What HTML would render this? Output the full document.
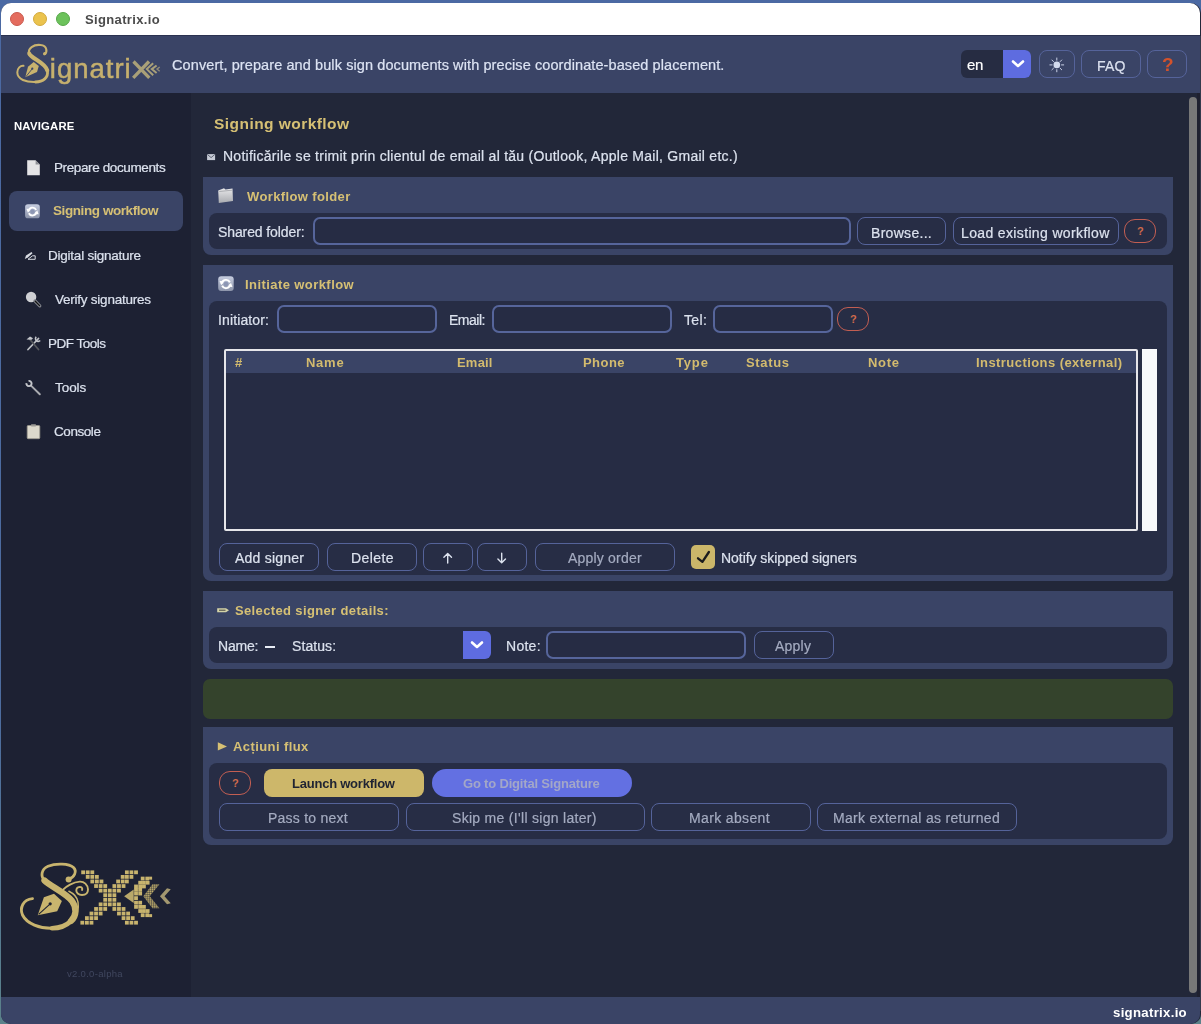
<!DOCTYPE html>
<html><head><meta charset="utf-8">
<style>
*{box-sizing:border-box;margin:0;padding:0}
html,body{width:1201px;height:1024px;overflow:hidden;background:linear-gradient(to bottom,#4b69a3 0%,#4d6c9e 70%,#5b828a 100%);font-family:"Liberation Sans",sans-serif;position:relative}
.r{position:absolute}
.t{position:absolute;white-space:nowrap;line-height:1;will-change:transform}
.t.nw{-webkit-text-stroke:0.2px currentColor}
#win{left:1px;top:3px;width:1200px;height:1021px;border-radius:10px;background:#222739}
#title{left:1px;top:3px;width:1199px;height:32px;background:#fff;border-radius:10px 10px 0 0}
#tline{left:1px;top:35px;width:1199px;height:1px;background:#2b3250}
.dot{position:absolute;top:11.6px;width:14px;height:14px;border-radius:50%}
#hdr{left:1px;top:36px;width:1199px;height:57px;background:#3a4466}
#side{left:1px;top:93px;width:190px;height:904px;background:#1d2133}
#foot{left:1px;top:997px;width:1199px;height:27px;background:#3a4466;border-radius:0 0 10px 10px}
.card{position:absolute;left:203px;width:970px;background:#3a4466;border-radius:0 0 8px 8px}
.panel{position:absolute;left:209px;width:958px;background:#272d45;border-radius:8px}
.inp{position:absolute;border:2px solid #56659b;border-radius:7px;background:#262c44}
.btn{position:absolute;border:1px solid #55639a;border-radius:8px}
.q{position:absolute;border:1px solid #c25e52;border-radius:11px}
.qt{position:absolute;color:#cf6a4c;font-size:11px;font-weight:bold;line-height:1;white-space:nowrap}

</style></head><body>
<div class="r" id="win"></div>
<div class="r" id="title"></div>
<div class="r" id="tline"></div>
<div class="dot" style="left:10px;background:#e46c5e;border:1px solid #c95a4e"></div>
<div class="dot" style="left:33px;background:#ebc34d;border:1px solid #d3aa3d"></div>
<div class="dot" style="left:56px;background:#6cc25b;border:1px solid #57a84a"></div>
<div class="r" id="hdr"></div>
<div class="r" id="side"></div>
<div class="r" id="foot"></div>
<!-- header controls -->
<div class="r" style="left:961px;top:50px;width:70px;height:28px;border-radius:6px;background:#262c42;overflow:hidden"><div class="r" style="left:42px;top:0;width:28px;height:28px;background:#5e6ce0"></div></div>
<svg class="r" style="left:1010px;top:58px" width="16" height="12" viewBox="0 0 16 12"><path d="M3 3.5 L8 8 L13 3.5" fill="none" stroke="#fff" stroke-width="2.6" stroke-linecap="round" stroke-linejoin="round"/></svg>
<div class="btn" style="left:1039px;top:50px;width:36px;height:28px"></div>
<svg class="r" style="left:1048px;top:56px" width="18" height="18" viewBox="0 0 18 18"><circle cx="8.8" cy="8.9" r="3.3" fill="#d3dbee"/><g stroke="#c9d1e6" stroke-width="1" stroke-linecap="round"><path d="M8.8 2V4.2M8.8 13.6V15.8M1.9 8.9H4.1M13.5 8.9H15.7M3.9 4L5.5 5.6M12.1 12.2L13.7 13.8M3.9 13.8L5.5 12.2M12.1 5.6L13.7 4"/></g></svg>
<div class="btn" style="left:1081px;top:50px;width:60px;height:28px"></div>
<div class="btn" style="left:1147px;top:50px;width:40px;height:28px"></div>
<div class="t" style="left:1162px;top:55px;font-size:19px;font-weight:bold;color:#d2522c">?</div>
<!-- sidebar -->
<div class="r" style="left:9px;top:191px;width:174px;height:40px;border-radius:8px;background:#3a4466"></div>
<!-- main scrollbar -->
<div class="r" id="rstrip" style="left:1197px;top:93px;width:3px;height:904px;background:#1f2130"></div>
<div class="r" style="left:1200px;top:36px;width:1px;height:975px;background:#343a4c"></div>
<div class="r" style="left:1189px;top:97px;width:8px;height:896px;border-radius:4px;background:#787878"></div>
<!-- card 1 -->
<div class="card" style="top:177px;height:78px"></div>
<div class="panel" style="top:213px;height:36px"></div>
<div class="inp" style="left:313px;top:217px;width:538px;height:28px"></div>
<div class="btn" style="left:857px;top:217px;width:89px;height:28px"></div>
<div class="btn" style="left:953px;top:217px;width:166px;height:28px"></div>
<div class="q" style="left:1124px;top:219px;width:32px;height:24px"></div>
<div class="qt" style="left:1137px;top:225.5px">?</div>
<!-- card 2 -->
<div class="card" style="top:265px;height:316px"></div>
<div class="panel" style="top:301px;height:274px"></div>
<div class="inp" style="left:277px;top:305px;width:160px;height:28px"></div>
<div class="inp" style="left:492px;top:305px;width:180px;height:28px"></div>
<div class="inp" style="left:713px;top:305px;width:120px;height:28px"></div>
<div class="q" style="left:837px;top:307px;width:32px;height:24px"></div>
<div class="qt" style="left:850px;top:313.5px">?</div>
<div class="r" style="left:224px;top:349px;width:914px;height:182px;border:2px solid #e6e6ea;border-radius:2px;background:#262c44"></div>
<div class="r" style="left:226px;top:351px;width:910px;height:22px;background:#3a4466"></div>
<div class="r" style="left:1142px;top:349px;width:15px;height:182px;background:#f8f9fb"></div>
<div class="btn" style="left:219px;top:543px;width:100px;height:28px"></div>
<div class="btn" style="left:327px;top:543px;width:90px;height:28px"></div>
<div class="btn" style="left:423px;top:543px;width:50px;height:28px"></div>
<div class="btn" style="left:477px;top:543px;width:50px;height:28px"></div>
<div class="btn" style="left:535px;top:543px;width:140px;height:28px"></div>
<div class="r" style="left:691px;top:545px;width:24px;height:24px;border-radius:5px;background:#cbb66a"></div>
<!-- card 3 -->
<div class="card" style="top:591px;height:78px"></div>
<div class="panel" style="top:627px;height:36px"></div>
<div class="r" style="left:265px;top:645.5px;width:10px;height:2px;background:#e8ecf5"></div>
<div class="r" style="left:463px;top:631px;width:28px;height:28px;border-radius:0 6px 6px 0;background:#5e6ce0"></div>
<svg class="r" style="left:469px;top:639px" width="16" height="12" viewBox="0 0 16 12"><path d="M3 3.5 L8 8 L13 3.5" fill="none" stroke="#fff" stroke-width="2.6" stroke-linecap="round" stroke-linejoin="round"/></svg>
<div class="inp" style="left:546px;top:631px;width:200px;height:28px"></div>
<div class="btn" style="left:754px;top:631px;width:80px;height:28px"></div>
<!-- green bar -->
<div class="r" style="left:203px;top:679px;width:970px;height:40px;border-radius:7px;background:#34432c"></div>
<!-- card 4 -->
<div class="card" style="top:727px;height:118px"></div>
<div class="panel" style="top:763px;height:76px"></div>
<div class="q" style="left:219px;top:771px;width:32px;height:24px"></div>
<div class="qt" style="left:232px;top:777.5px">?</div>
<div class="r" style="left:264px;top:769px;width:160px;height:28px;border-radius:8px;background:#cdb76a"></div>
<div class="r" style="left:432px;top:769px;width:200px;height:28px;border-radius:14px;background:#6370e2"></div>
<div class="btn" style="left:219px;top:803px;width:180px;height:28px"></div>
<div class="btn" style="left:406px;top:803px;width:239px;height:28px"></div>
<div class="btn" style="left:651px;top:803px;width:160px;height:28px"></div>
<div class="btn" style="left:817px;top:803px;width:200px;height:28px"></div>

<svg class="r" style="left:0;top:0" width="1201" height="1024" viewBox="0 0 1201 1024">
<defs>
 <linearGradient id="gsync" x1="0" y1="0" x2="0" y2="1"><stop offset="0" stop-color="#c6cde0"/><stop offset="1" stop-color="#8c94aa"/></linearGradient>
 <linearGradient id="gfold" x1="0" y1="0" x2="0" y2="1"><stop offset="0" stop-color="#e8e8ea"/><stop offset="1" stop-color="#a9abb0"/></linearGradient>
<g id="sync">
 <rect x="0" y="0" width="15.5" height="14.8" rx="3" fill="url(#gsync)"/>
 <circle cx="7.8" cy="7.7" r="2.3" fill="#8d97b4"/>
 <g fill="none" stroke="#fff" stroke-width="1.9">
  <path d="M3.6 7.4 A4.3 4.3 0 0 1 11.7 5.9"/>
  <path d="M12 8.1 A4.3 4.3 0 0 1 3.9 9.5"/>
 </g>
 <path d="M1.4 4.8 L5.9 5 L3 8.9 Z M14.2 10.6 L9.8 10.2 L12.8 6.4 Z" fill="#fff"/>
</g>
<pattern id="grid" x="0" y="0" width="1.9" height="1.9" patternUnits="userSpaceOnUse"><rect width="1.5" height="1.5" fill="#c8b46e"/></pattern>
</defs>
<!-- ===== header logo ===== -->
<g fill="none" stroke="#c9b36e" stroke-linecap="round">
 <path d="M44.3 54.2 C47.5 52.5 47.6 45.6 40.5 45 C33.5 44.3 27.5 48.5 29.2 53.5" stroke-width="2.1"/>
 <path d="M29.2 53.5 C31 58.5 45.5 62.5 47.3 70.5" stroke-width="4"/>
 <path d="M47.3 70.5 C48.8 77.5 43 82 35.5 82" stroke-width="2.8"/>
 <path d="M35.5 82 C26 82.3 17.5 79.5 17.3 72.5 C17.2 68 20.5 65.5 23.5 65.8" stroke-width="2"/>
</g>
<circle cx="44.8" cy="53.6" r="1.7" fill="#c9b36e"/>
<path d="M33.7 62 L38.8 66 L37 72 L25.3 77.3 L28 66.7 Z" fill="#c9b36e"/>
<path d="M32.3 68.7 L25.8 76.8" stroke="#3a4466" stroke-width="0.9"/>
<circle cx="32.3" cy="68.7" r="1.1" fill="#3a4466"/>
<text x="49.8" y="78" font-family="Liberation Sans" font-size="27.5" fill="#c6b06e" stroke="#c6b06e" stroke-width="0.5" letter-spacing="1.0">ignatri</text>
<g stroke="#a9a078" stroke-width="3.3" stroke-linecap="butt">
 <path d="M133.5 61.5 L149.3 77.8 M149 61.5 L133.2 77.8"/>
</g>
<g fill="none" stroke="#a9a078" stroke-width="2">
 <path d="M153.2 63.3 L146.8 69.1 L153.2 75.3"/>
 <path d="M156.6 65.5 L151.8 69.1 L156.6 73"/>
 <path d="M159.7 67 L157 69.1 L159.7 71.3" stroke-width="1.4" stroke="#8f8a78"/>
</g>
<!-- ===== sidebar icons ===== -->
<path d="M27.2 160.2 H35.6 L39.8 164.4 V175.2 H27.2 Z" fill="#e4e4e6"/>
<path d="M35.6 160.2 V164.4 H39.8 Z" fill="#8d8f96"/>
<use href="#sync" transform="translate(25.1 204.2) scale(0.95)"/>
<g fill="#d8dbe2">
 <path d="M24.8 259 L26 255.5 L31.5 252 L32.5 253.2 L27.8 257.5 Z"/>
 <path d="M28 259.3 H35.2 V255.8 H32.5 Z" fill="none" stroke="#d8dbe2" stroke-width="1"/>
</g>
<circle cx="31.1" cy="297" r="5.2" fill="#cfd0d4"/>
<path d="M35 301 L39.8 305.8" stroke="#80838b" stroke-width="3.2" stroke-linecap="round"/>
<path d="M35.3 301.3 L39.6 305.6" stroke="#141414" stroke-width="1.3" stroke-linecap="round"/>
<g stroke="#bdbfc4" stroke-width="1.8" stroke-linecap="round">
 <path d="M28 349.5 L38.5 338.5"/>
 <path d="M29.5 339 L38.5 349.5" stroke="#55575c"/>
</g>
<path d="M26.5 339.5 L30 336.5 L33 338.2 L31.6 339.8 Z" fill="#c4c6cb"/>
<path d="M36.2 336.8 A2.6 2.6 0 1 0 40.2 340.5" fill="none" stroke="#c4c6cb" stroke-width="1.6"/>
<path d="M31 385.6 L39.8 394.2" stroke="#a9abb0" stroke-width="2" stroke-linecap="round"/>
<path d="M28.55 380.94 A2.6 2.6 0 1 1 26.44 383.05" fill="none" stroke="#c4c6cb" stroke-width="1.9"/>
<rect x="27.2" y="425.5" width="12.6" height="13.2" rx="1" fill="#ddd9cc" stroke="#9a978d" stroke-width="0.8"/>
<rect x="31" y="424.2" width="5" height="2.2" rx="0.6" fill="#9c9a95"/>
<!-- ===== main icons ===== -->
<rect x="207.1" y="154.1" width="8" height="6" fill="#c7cbd6"/>
<path d="M207.3 154.4 L211.1 157.6 L214.9 154.4" fill="none" stroke="#444a5c" stroke-width="0.8"/>
<path d="M218.2 190.5 L224 188.3 L225.5 189.5 L232.5 188.5 L233 201 L218.8 203 Z" fill="url(#gfold)"/>
<path d="M219.3 191.5 L232 190.2" stroke="#8a8c92" stroke-width="0.6"/>
<use href="#sync" transform="translate(218.2 276.3)"/>
<path d="M217.2 608.2 H226 L229 610.2 L226 612.2 H217.2 Z" fill="#d4d3a8"/>
<path d="M219 610.2 H225.5" stroke="#333" stroke-width="0.9"/>
<path d="M217.8 742.3 L227 746.5 L217.8 750.6 Z" fill="#d6c074"/>
<!-- arrows -->
<g stroke="#dce2ee" stroke-width="1.4" fill="none" stroke-linecap="round" stroke-linejoin="round">
 <path d="M447.7 563 V553.6 M443.9 557.2 L447.7 553.4 L451.5 557.2"/>
 <path d="M501.7 553.2 V562.6 M497.9 559 L501.7 562.8 L505.5 559"/>
</g>
<path d="M698 558.3 L702.4 561.9 L708.9 552" fill="none" stroke="#1b1b1d" stroke-width="2.3" stroke-linecap="round" stroke-linejoin="round"/>
<!-- ===== sidebar logo ===== -->
<g fill="#c8b46e">
<rect x="81.24" y="870.41" width="3.8" height="3.8"/>
<rect x="85.82" y="870.41" width="3.8" height="3.8"/>
<rect x="90.40" y="870.41" width="3.8" height="3.8"/>
<rect x="124.96" y="870.41" width="3.8" height="3.8"/>
<rect x="129.54" y="870.41" width="3.8" height="3.8"/>
<rect x="134.12" y="870.41" width="3.8" height="3.8"/>
<rect x="85.82" y="874.99" width="3.8" height="3.8"/>
<rect x="90.40" y="874.99" width="3.8" height="3.8"/>
<rect x="94.98" y="874.99" width="3.8" height="3.8"/>
<rect x="120.80" y="874.99" width="3.8" height="3.8"/>
<rect x="124.96" y="874.99" width="3.8" height="3.8"/>
<rect x="129.54" y="874.99" width="3.8" height="3.8"/>
<rect x="90.40" y="879.57" width="3.8" height="3.8"/>
<rect x="94.98" y="879.57" width="3.8" height="3.8"/>
<rect x="99.56" y="879.57" width="3.8" height="3.8"/>
<rect x="116.22" y="879.57" width="3.8" height="3.8"/>
<rect x="120.80" y="879.57" width="3.8" height="3.8"/>
<rect x="124.96" y="879.57" width="3.8" height="3.8"/>
<rect x="94.15" y="884.15" width="3.8" height="3.8"/>
<rect x="98.73" y="884.15" width="3.8" height="3.8"/>
<rect x="103.31" y="884.15" width="3.8" height="3.8"/>
<rect x="112.47" y="884.15" width="3.8" height="3.8"/>
<rect x="117.05" y="884.15" width="3.8" height="3.8"/>
<rect x="121.63" y="884.15" width="3.8" height="3.8"/>
<rect x="98.73" y="888.73" width="3.8" height="3.8"/>
<rect x="103.31" y="888.73" width="3.8" height="3.8"/>
<rect x="107.89" y="888.73" width="3.8" height="3.8"/>
<rect x="112.47" y="888.73" width="3.8" height="3.8"/>
<rect x="117.05" y="888.73" width="3.8" height="3.8"/>
<rect x="103.31" y="893.31" width="3.8" height="3.8"/>
<rect x="107.89" y="893.31" width="3.8" height="3.8"/>
<rect x="112.47" y="893.31" width="3.8" height="3.8"/>
<rect x="103.31" y="897.89" width="3.8" height="3.8"/>
<rect x="107.89" y="897.89" width="3.8" height="3.8"/>
<rect x="112.47" y="897.89" width="3.8" height="3.8"/>
<rect x="98.73" y="902.47" width="3.8" height="3.8"/>
<rect x="103.31" y="902.47" width="3.8" height="3.8"/>
<rect x="107.89" y="902.47" width="3.8" height="3.8"/>
<rect x="112.47" y="902.47" width="3.8" height="3.8"/>
<rect x="117.05" y="902.47" width="3.8" height="3.8"/>
<rect x="94.15" y="907.05" width="3.8" height="3.8"/>
<rect x="98.73" y="907.05" width="3.8" height="3.8"/>
<rect x="103.31" y="907.05" width="3.8" height="3.8"/>
<rect x="112.47" y="907.05" width="3.8" height="3.8"/>
<rect x="117.05" y="907.05" width="3.8" height="3.8"/>
<rect x="121.63" y="907.05" width="3.8" height="3.8"/>
<rect x="89.57" y="911.63" width="3.8" height="3.8"/>
<rect x="94.15" y="911.63" width="3.8" height="3.8"/>
<rect x="98.73" y="911.63" width="3.8" height="3.8"/>
<rect x="117.05" y="911.63" width="3.8" height="3.8"/>
<rect x="121.63" y="911.63" width="3.8" height="3.8"/>
<rect x="126.21" y="911.63" width="3.8" height="3.8"/>
<rect x="84.99" y="916.21" width="3.8" height="3.8"/>
<rect x="89.57" y="916.21" width="3.8" height="3.8"/>
<rect x="94.15" y="916.21" width="3.8" height="3.8"/>
<rect x="121.63" y="916.21" width="3.8" height="3.8"/>
<rect x="126.21" y="916.21" width="3.8" height="3.8"/>
<rect x="130.79" y="916.21" width="3.8" height="3.8"/>
<rect x="80.41" y="920.79" width="3.8" height="3.8"/>
<rect x="84.99" y="920.79" width="3.8" height="3.8"/>
<rect x="89.57" y="920.79" width="3.8" height="3.8"/>
<rect x="124.96" y="920.79" width="3.8" height="3.8"/>
<rect x="129.54" y="920.79" width="3.8" height="3.8"/>
<rect x="134.12" y="920.79" width="3.8" height="3.8"/>
<rect x="140.78" y="876.66" width="3.8" height="3.8"/>
<rect x="145.36" y="876.66" width="3.8" height="3.8"/>
<rect x="138.28" y="880.82" width="3.8" height="3.8"/>
<rect x="142.03" y="880.82" width="3.8" height="3.8"/>
<rect x="145.77" y="880.82" width="3.8" height="3.8"/>
<rect x="134.12" y="884.57" width="3.8" height="3.8"/>
<rect x="138.28" y="884.57" width="3.8" height="3.8"/>
<rect x="142.03" y="884.57" width="3.8" height="3.8"/>
<rect x="134.12" y="887.90" width="3.8" height="3.8"/>
<rect x="138.28" y="887.90" width="3.8" height="3.8"/>
<rect x="134.12" y="891.64" width="3.8" height="3.8"/>
<rect x="138.28" y="891.64" width="3.8" height="3.8"/>
<rect x="134.12" y="896.22" width="3.8" height="3.8"/>
<rect x="134.12" y="900.80" width="3.8" height="3.8"/>
<rect x="138.28" y="900.80" width="3.8" height="3.8"/>
<rect x="134.12" y="904.97" width="3.8" height="3.8"/>
<rect x="138.28" y="904.97" width="3.8" height="3.8"/>
<rect x="142.03" y="904.97" width="3.8" height="3.8"/>
<rect x="138.28" y="909.13" width="3.8" height="3.8"/>
<rect x="142.03" y="909.13" width="3.8" height="3.8"/>
<rect x="145.77" y="909.13" width="3.8" height="3.8"/>
<rect x="140.78" y="913.29" width="3.8" height="3.8"/>
<rect x="145.36" y="913.29" width="3.8" height="3.8"/>
<rect x="149.10" y="876.66" width="3" height="3"/>
<rect x="149.10" y="914.13" width="3" height="3"/>
<path d="M124.13 896.22 L133.70 889.56 L133.70 902.89 Z" fill="#b9a86a"/>
<path d="M143.28 896.22 L152.44 884.32 L159.51 884.32 L149.77 896.22 L159.51 908.13 L152.44 908.13 Z" fill="url(#grid)"/>
<path d="M159.93 896.22 L167.01 888.31 L170.75 889.31 L164.51 896.22 L170.75 903.13 L167.01 904.13 Z" fill="#a39870"/>
</g>
<g fill="none" stroke="#c8b46e" stroke-linecap="round">
 <path d="M68.9 879.2 C74 877.5 77.5 871.5 73.5 867.5 C69 863.5 56 863 48 866.3 C41 869.3 40.5 876.5 44.5 880.5" stroke-width="2.8"/>
 <path d="M44.5 880.5 C50 886 66 893 72 901 C77 908 76.5 916 71 921" stroke-width="6.3"/>
 <path d="M71 921 C66 926 59 928.2 52 928.2" stroke-width="4.6"/>
 <path d="M52 928.2 C40 928.5 27 924 22.5 915 C19.5 908 23 899.5 32.5 898.6" stroke-width="2.9"/>
 <path d="M63.4 889.4 C66 886.5 73 882 79.8 881.6 C84 881.4 87.8 884.5 88 889.5 C88 893 85.5 895 82 895 C78.5 895 76 892.5 76.3 890 C76.6 887.5 79 886.5 81 887.2 C82.3 887.8 82.5 889 82 890" stroke-width="1.9"/>
 <path d="M68.9 891.3 C73.5 893.5 77 896 78 902 C79 908 77 915 72.8 920.6" stroke-width="1.5"/>
</g>
<circle cx="68.6" cy="879.4" r="3" fill="#c8b46e"/>
<path d="M54 893.7 L61.9 901 L57.2 911.2 L37.7 915.2 L43.9 897.2 Z" fill="#c8b46e"/>
<path d="M50.2 903.8 L38.6 914.4" stroke="#1d2133" stroke-width="1.1"/>
<circle cx="50.2" cy="903.8" r="1.6" fill="#1d2133"/>
</svg>

<div class="t" id="xtitle" style="left:84.6px;top:12.8px;font-size:13px;font-weight:bold;color:#4b4b4b;letter-spacing:0.355px">Signatrix.io</div>
<div class="t nw" id="xtag" style="left:171.5px;top:57.6px;font-size:14.5px;font-weight:normal;color:#dce3f3;letter-spacing:0.094px">Convert, prepare and bulk sign documents with precise coordinate-based placement.</div>
<div class="t nw" id="xen" style="left:967.4px;top:56.7px;font-size:15px;font-weight:normal;color:#ffffff;letter-spacing:-0.400px">en</div>
<div class="t nw" id="xfaq" style="left:1096.6px;top:58.5px;font-size:14px;font-weight:normal;color:#dbe1ef;letter-spacing:0.250px">FAQ</div>
<div class="t" id="xnav" style="left:14.3px;top:120.5px;font-size:11.3px;font-weight:bold;color:#ffffff;letter-spacing:0.214px">NAVIGARE</div>
<div class="t nw" id="xn1" style="left:54.4px;top:160.6px;font-size:13.5px;font-weight:normal;color:#dce2ee;letter-spacing:-0.381px">Prepare documents</div>
<div class="t" id="xn2" style="left:52.5px;top:204.3px;font-size:13.5px;font-weight:bold;color:#d6c074;letter-spacing:-0.420px">Signing workflow</div>
<div class="t nw" id="xn3" style="left:47.7px;top:248.6px;font-size:13.5px;font-weight:normal;color:#dce2ee;letter-spacing:-0.231px">Digital signature</div>
<div class="t nw" id="xn4" style="left:55.4px;top:293.0px;font-size:13.5px;font-weight:normal;color:#dce2ee;letter-spacing:-0.238px">Verify signatures</div>
<div class="t nw" id="xn5" style="left:47.7px;top:336.6px;font-size:13.5px;font-weight:normal;color:#dce2ee;letter-spacing:-0.500px">PDF Tools</div>
<div class="t nw" id="xn6" style="left:55.4px;top:380.8px;font-size:13.5px;font-weight:normal;color:#dce2ee;letter-spacing:-0.050px">Tools</div>
<div class="t nw" id="xn7" style="left:54.4px;top:424.6px;font-size:13.5px;font-weight:normal;color:#dce2ee;letter-spacing:-0.433px">Console</div>
<div class="t" id="xver" style="left:67.4px;top:969.0px;font-size:9.5px;font-weight:400;color:#40475f;letter-spacing:0.300px">v2.0.0-alpha</div>
<div class="t" id="xh1" style="left:213.7px;top:115.7px;font-size:15.5px;font-weight:bold;color:#d6c074;letter-spacing:0.453px">Signing workflow</div>
<div class="t nw" id="xnote" style="left:222.6px;top:148.9px;font-size:14px;font-weight:normal;color:#dce2ee;letter-spacing:0.260px">Notificările se trimit prin clientul de email al tău (Outlook, Apple Mail, Gmail etc.)</div>
<div class="t" id="xc1" style="left:246.5px;top:190.0px;font-size:13px;font-weight:bold;color:#d6c074;letter-spacing:0.379px">Workflow folder</div>
<div class="t nw" id="xsf" style="left:218.3px;top:224.9px;font-size:14px;font-weight:normal;color:#dce2ee;letter-spacing:-0.100px">Shared folder:</div>
<div class="t nw" id="xbr" style="left:871.0px;top:225.5px;font-size:14px;font-weight:normal;color:#dce2ee;letter-spacing:0.300px">Browse...</div>
<div class="t nw" id="xle" style="left:960.9px;top:225.5px;font-size:14px;font-weight:normal;color:#dce2ee;letter-spacing:0.357px">Load existing workflow</div>
<div class="t" id="xc2" style="left:245.2px;top:277.8px;font-size:13px;font-weight:bold;color:#d6c074;letter-spacing:0.425px">Initiate workflow</div>
<div class="t nw" id="xini" style="left:218.2px;top:313.1px;font-size:14px;font-weight:normal;color:#dce2ee;letter-spacing:0.122px">Initiator:</div>
<div class="t nw" id="xem" style="left:448.7px;top:313.1px;font-size:14px;font-weight:normal;color:#dce2ee;letter-spacing:-0.500px">Email:</div>
<div class="t nw" id="xtel" style="left:684.3px;top:313.1px;font-size:14px;font-weight:normal;color:#dce2ee;letter-spacing:0.333px">Tel:</div>
<div class="t" id="xth1" style="left:234.9px;top:356.0px;font-size:13px;font-weight:bold;color:#d3bb6e;letter-spacing:0.000px">#</div>
<div class="t" id="xth2" style="left:305.6px;top:356.0px;font-size:13px;font-weight:bold;color:#d3bb6e;letter-spacing:0.733px">Name</div>
<div class="t" id="xth3" style="left:456.6px;top:356.0px;font-size:13px;font-weight:bold;color:#d3bb6e;letter-spacing:0.200px">Email</div>
<div class="t" id="xth4" style="left:583.0px;top:356.0px;font-size:13px;font-weight:bold;color:#d3bb6e;letter-spacing:0.450px">Phone</div>
<div class="t" id="xth5" style="left:676.3px;top:356.0px;font-size:13px;font-weight:bold;color:#d3bb6e;letter-spacing:0.833px">Type</div>
<div class="t" id="xth6" style="left:745.5px;top:356.0px;font-size:13px;font-weight:bold;color:#d3bb6e;letter-spacing:0.660px">Status</div>
<div class="t" id="xth7" style="left:868.4px;top:356.0px;font-size:13px;font-weight:bold;color:#d3bb6e;letter-spacing:0.733px">Note</div>
<div class="t" id="xth8" style="left:976.4px;top:356.0px;font-size:13px;font-weight:bold;color:#d3bb6e;letter-spacing:0.436px">Instructions (external)</div>
<div class="t nw" id="xb1" style="left:234.6px;top:551.1px;font-size:14px;font-weight:normal;color:#dce2ee;letter-spacing:0.222px">Add signer</div>
<div class="t nw" id="xb2" style="left:350.5px;top:551.1px;font-size:14px;font-weight:normal;color:#dce2ee;letter-spacing:0.400px">Delete</div>
<div class="t nw" id="xb5" style="left:567.6px;top:551.1px;font-size:14px;font-weight:normal;color:#a4abc0;letter-spacing:0.200px">Apply order</div>
<div class="t nw" id="xchk" style="left:720.5px;top:551.1px;font-size:14px;font-weight:normal;color:#dce2ee;letter-spacing:-0.052px">Notify skipped signers</div>
<div class="t" id="xc3" style="left:235.0px;top:604.0px;font-size:13px;font-weight:bold;color:#d6c074;letter-spacing:0.361px">Selected signer details:</div>
<div class="t nw" id="xnm" style="left:218.2px;top:638.6px;font-size:14px;font-weight:normal;color:#dce2ee;letter-spacing:-0.225px">Name:</div>
<div class="t nw" id="xst" style="left:291.5px;top:638.6px;font-size:14px;font-weight:normal;color:#dce2ee;letter-spacing:0.083px">Status:</div>
<div class="t nw" id="xnt" style="left:506.4px;top:638.6px;font-size:14px;font-weight:normal;color:#dce2ee;letter-spacing:0.275px">Note:</div>
<div class="t nw" id="xap" style="left:775.4px;top:639.0px;font-size:14px;font-weight:normal;color:#a4abc0;letter-spacing:0.225px">Apply</div>
<div class="t" id="xc4" style="left:233.0px;top:740.0px;font-size:13px;font-weight:bold;color:#d6c074;letter-spacing:0.409px">Acțiuni flux</div>
<div class="t" id="xlw" style="left:291.6px;top:776.6px;font-size:13px;font-weight:bold;color:#1f2332;letter-spacing:-0.229px">Launch workflow</div>
<div class="t" id="xgd" style="left:462.6px;top:776.6px;font-size:13px;font-weight:bold;color:#a3a7c8;letter-spacing:-0.186px">Go to Digital Signature</div>
<div class="t nw" id="xp1" style="left:268.4px;top:811.1px;font-size:14px;font-weight:normal;color:#a4abc0;letter-spacing:0.236px">Pass to next</div>
<div class="t nw" id="xp2" style="left:452.4px;top:811.1px;font-size:14px;font-weight:normal;color:#a4abc0;letter-spacing:0.300px">Skip me (I'll sign later)</div>
<div class="t nw" id="xp3" style="left:689.3px;top:811.1px;font-size:14px;font-weight:normal;color:#a4abc0;letter-spacing:0.360px">Mark absent</div>
<div class="t nw" id="xp4" style="left:833.2px;top:811.1px;font-size:14px;font-weight:normal;color:#a4abc0;letter-spacing:0.300px">Mark external as returned</div>
<div class="t" id="xft" style="left:1113.3px;top:1005.6px;font-size:13.2px;font-weight:bold;color:#ffffff;letter-spacing:0.300px">signatrix.io</div>
</body></html>
